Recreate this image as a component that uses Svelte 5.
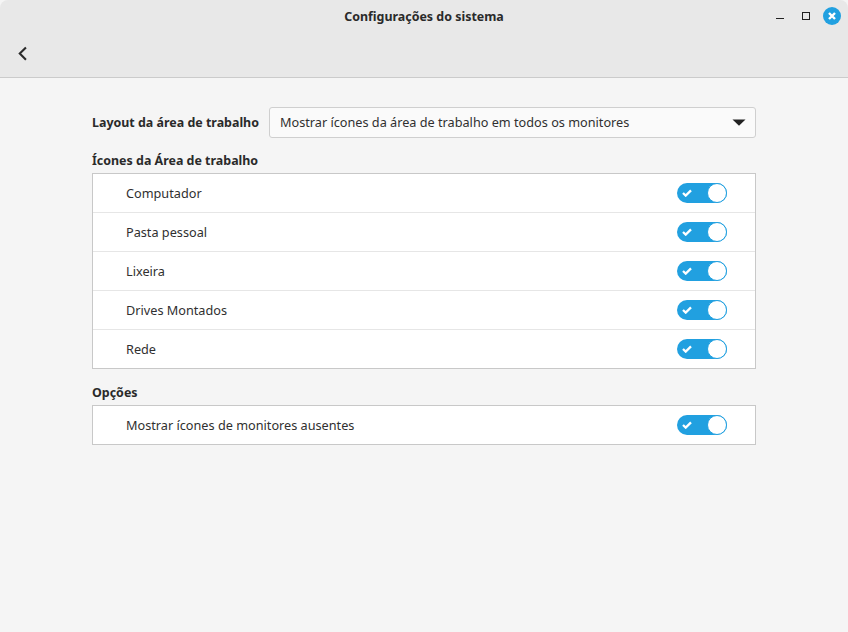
<script>
  let groups = [
    { title: "Ícones da Área de trabalho", items: ["Computador", "Pasta pessoal", "Lixeira", "Drives Montados", "Rede"] },
    { title: "Opções", items: ["Mostrar ícones de monitores ausentes"] }
  ];
</script>

<div class="window">
  <header>
    <div class="titlebar">
      <span class="title">Configurações do sistema</span>
      <div class="controls">
        <svg class="min" width="14" height="14" viewBox="0 0 14 14"><rect x="2" y="9" width="8" height="1" fill="#222" /></svg>
        <svg class="max" width="14" height="14" viewBox="0 0 14 14"><rect x="3.5" y="3.5" width="7" height="7" fill="none" stroke="#222" /></svg>
        <svg width="18" height="18" viewBox="0 0 18 18">
          <circle cx="9" cy="9" r="9" fill="#21a0e0" />
          <path d="M6 6l6 6M12 6l-6 6" stroke="#fff" stroke-width="2.4" />
        </svg>
      </div>
    </div>
    <div class="toolbar">
      <svg width="16" height="16" viewBox="0 0 16 16">
        <path d="M11 1.5L4.5 8l6.5 6.5" transform="translate(0.5 0) scale(0.95)" fill="none" stroke="#2a2a2a" stroke-width="2.2" />
      </svg>
    </div>
  </header>

  <main>
    <div class="layout-row">
      <span class="bold">Layout da área de trabalho</span>
      <div class="select">
        <span>Mostrar ícones da área de trabalho em todos os monitores</span>
        <svg width="14" height="7" viewBox="0 0 14 7"><path d="M0.5 0.5h13L7 6.8z" fill="#222" /></svg>
      </div>
    </div>

    {#each groups as group}
      <section>
        <div class="bold heading">{group.title}</div>
        <div class="box">
          {#each group.items as item}
            <div class="row">
              <span>{item}</span>
              <div class="switch">
                <svg width="10" height="8" viewBox="0 0 10 8"><path d="M1 4l2.7 2.6L9 1.4" fill="none" stroke="#fff" stroke-width="2.3" /></svg>
                <div class="knob"></div>
              </div>
            </div>
          {/each}
        </div>
      </section>
    {/each}
  </main>
</div>

<style>
  :global(body) {
    margin: 0;
    background: #f5f5f5;
  }
  .window {
    width: 848px;
    height: 632px;
    background: #f5f5f5;
    font-family: "Noto Sans", sans-serif;
    font-size: 12.7px;
    color: #303030;
    overflow: hidden;
  }
  header {
    height: 77px;
    background: #e8e8e8;
    border-bottom: 1px solid #cbcbcb;
    border-radius: 8px 8px 0 0;
  }
  .titlebar {
    height: 33px;
    display: flex;
    align-items: center;
    justify-content: center;
    position: relative;
  }
  .title {
    font-weight: 700;
    font-size: 12.45px;
    color: #2a2a2a;
  }
  .controls {
    position: absolute;
    right: 7px;
    top: 7px;
    display: flex;
    align-items: center;
  }
  .min {
    margin-right: 11px;
  }
  .max {
    margin-right: 10px;
  }
  .toolbar {
    height: 44px;
    display: flex;
    align-items: center;
    padding-left: 15px;
    box-sizing: border-box;
    padding-bottom: 3px;
  }
  main {
    padding: 29px 92px 0;
  }
  .bold {
    font-weight: 700;
    color: #2a2a2a;
    font-size: 12.45px;
  }
  .layout-row {
    display: flex;
    align-items: center;
    gap: 10px;
    height: 31px;
  }
  .select {
    flex: 1;
    height: 31px;
    box-sizing: border-box;
    background: #fafafa;
    border: 1px solid #cfcfcf;
    border-radius: 3px;
    display: flex;
    align-items: center;
    justify-content: space-between;
    padding: 0 9px 0 10px;
  }
  .select span {
    margin-bottom: 2px;
  }
  section {
    margin-top: 13px;
  }
  section + section {
    margin-top: 14px;
  }
  .heading {
    height: 22px;
    line-height: 20px;
  }
  .box {
    background: #fff;
    border: 1px solid #c8c8c8;
  }
  .row {
    height: 38px;
    box-sizing: content-box;
    display: flex;
    align-items: center;
    justify-content: space-between;
    padding: 0 28px 0 33px;
  }
  .row + .row {
    border-top: 1px solid #e6e6e6;
  }
  .switch {
    width: 50px;
    height: 20px;
    border-radius: 10px;
    background: #21a0e0;
    display: flex;
    align-items: center;
    justify-content: space-between;
    padding: 0 0 0 5px;
    box-sizing: border-box;
  }
  .knob {
    width: 20px;
    height: 20px;
    box-sizing: border-box;
    border-radius: 50%;
    background: #fff;
    border: 1px solid #21a0e0;
  }
</style>
